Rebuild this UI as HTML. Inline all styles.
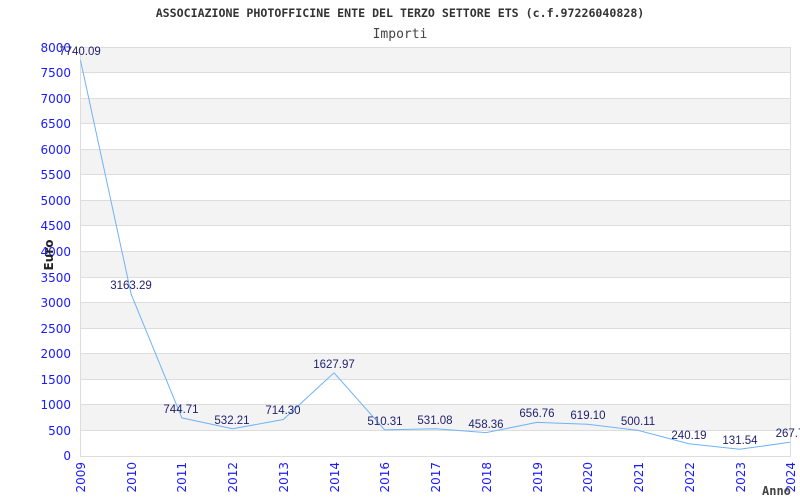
<!DOCTYPE html>
<html><head><meta charset="utf-8"><style>body{margin:0;background:#fff}svg{display:block}</style></head><body>
<svg width="800" height="500" xmlns="http://www.w3.org/2000/svg">
<text x="400" y="17" text-anchor="middle" font-family="DejaVu Sans Mono, Liberation Mono, monospace" font-weight="bold" font-size="11.6" fill="#333">ASSOCIAZIONE PHOTOFFICINE ENTE DEL TERZO SETTORE ETS (c.f.97226040828)</text>
<text x="400" y="38" text-anchor="middle" font-family="DejaVu Sans Mono, Liberation Mono, monospace" font-size="13" fill="#444">Importi</text>
<g fill="#f3f3f3">
<rect x="80.5" y="47" width="709.5" height="25.56"/>
<rect x="80.5" y="98.1" width="709.5" height="25.56"/>
<rect x="80.5" y="149.25" width="709.5" height="25.56"/>
<rect x="80.5" y="200.4" width="709.5" height="25.56"/>
<rect x="80.5" y="251.5" width="709.5" height="25.56"/>
<rect x="80.5" y="302.6" width="709.5" height="25.56"/>
<rect x="80.5" y="353.75" width="709.5" height="25.56"/>
<rect x="80.5" y="404.9" width="709.5" height="25.56"/>
</g>
<g stroke="#ddd" stroke-width="1">
<line x1="80" y1="47.5" x2="790" y2="47.5"/><line x1="80" y1="72.5" x2="790" y2="72.5"/><line x1="80" y1="98.5" x2="790" y2="98.5"/><line x1="80" y1="123.5" x2="790" y2="123.5"/><line x1="80" y1="149.5" x2="790" y2="149.5"/><line x1="80" y1="174.5" x2="790" y2="174.5"/><line x1="80" y1="200.5" x2="790" y2="200.5"/><line x1="80" y1="225.5" x2="790" y2="225.5"/><line x1="80" y1="251.5" x2="790" y2="251.5"/><line x1="80" y1="277.5" x2="790" y2="277.5"/><line x1="80" y1="302.5" x2="790" y2="302.5"/><line x1="80" y1="328.5" x2="790" y2="328.5"/><line x1="80" y1="353.5" x2="790" y2="353.5"/><line x1="80" y1="379.5" x2="790" y2="379.5"/><line x1="80" y1="404.5" x2="790" y2="404.5"/><line x1="80" y1="430.5" x2="790" y2="430.5"/>
<line x1="80.5" y1="47" x2="80.5" y2="456"/><line x1="790.5" y1="47" x2="790.5" y2="456"/><line x1="80" y1="456.5" x2="791" y2="456.5"/>
</g>
<g font-family="DejaVu Sans, sans-serif" font-size="12" fill="#1a1aff" text-anchor="end">
<text x="71" y="52">8000</text><text x="71" y="77">7500</text><text x="71" y="103">7000</text><text x="71" y="128">6500</text><text x="71" y="154">6000</text><text x="71" y="179">5500</text><text x="71" y="205">5000</text><text x="71" y="230">4500</text><text x="71" y="256">4000</text><text x="71" y="282">3500</text><text x="71" y="307">3000</text><text x="71" y="333">2500</text><text x="71" y="358">2000</text><text x="71" y="384">1500</text><text x="71" y="409">1000</text><text x="71" y="435">500</text><text x="71" y="460">0</text>
</g>
<g font-family="DejaVu Sans, sans-serif" font-size="12" fill="#1a1aff" text-anchor="end">
<text transform="translate(85,462) rotate(-90)">2009</text>
<text transform="translate(136,462) rotate(-90)">2010</text>
<text transform="translate(186,462) rotate(-90)">2011</text>
<text transform="translate(237,462) rotate(-90)">2012</text>
<text transform="translate(288,462) rotate(-90)">2013</text>
<text transform="translate(339,462) rotate(-90)">2014</text>
<text transform="translate(389,462) rotate(-90)">2016</text>
<text transform="translate(440,462) rotate(-90)">2017</text>
<text transform="translate(491,462) rotate(-90)">2018</text>
<text transform="translate(542,462) rotate(-90)">2019</text>
<text transform="translate(592,462) rotate(-90)">2020</text>
<text transform="translate(643,462) rotate(-90)">2021</text>
<text transform="translate(694,462) rotate(-90)">2022</text>
<text transform="translate(745,462) rotate(-90)">2023</text>
<text transform="translate(795,462) rotate(-90)">2024</text>
</g>
<text transform="translate(53,255) rotate(-90)" text-anchor="middle" font-family="DejaVu Sans, sans-serif" font-weight="bold" font-size="12" fill="#222">Euro</text>
<text x="762" y="495" font-family="DejaVu Sans Mono, monospace" font-weight="bold" font-size="12" fill="#444">Anno</text>
<polyline fill="none" stroke="#6fb3f5" stroke-width="1" points="80.5,60.3 131.2,294.3 181.9,417.9 232.6,428.8 283.3,419.5 334,372.8 384.7,429.9 435.4,428.8 486.1,432.6 536.8,422.4 587.5,424.3 638.2,430.4 688.9,443.7 739.6,449.3 790,442.3"/>
<g font-family="Liberation Sans, sans-serif" font-size="11.5" fill="#1f1f6e" text-anchor="middle">
<text x="80" y="55">7740.09</text>
<text x="131" y="289">3163.29</text>
<text x="181" y="413">744.71</text>
<text x="232" y="424">532.21</text>
<text x="283" y="414">714.30</text>
<text x="334" y="368">1627.97</text>
<text x="385" y="425">510.31</text>
<text x="435" y="424">531.08</text>
<text x="486" y="428">458.36</text>
<text x="537" y="417">656.76</text>
<text x="588" y="419">619.10</text>
<text x="638" y="425">500.11</text>
<text x="689" y="439">240.19</text>
<text x="740" y="444">131.54</text>
<text x="790" y="437">267.7</text>
</g>
</svg>
</body></html>
